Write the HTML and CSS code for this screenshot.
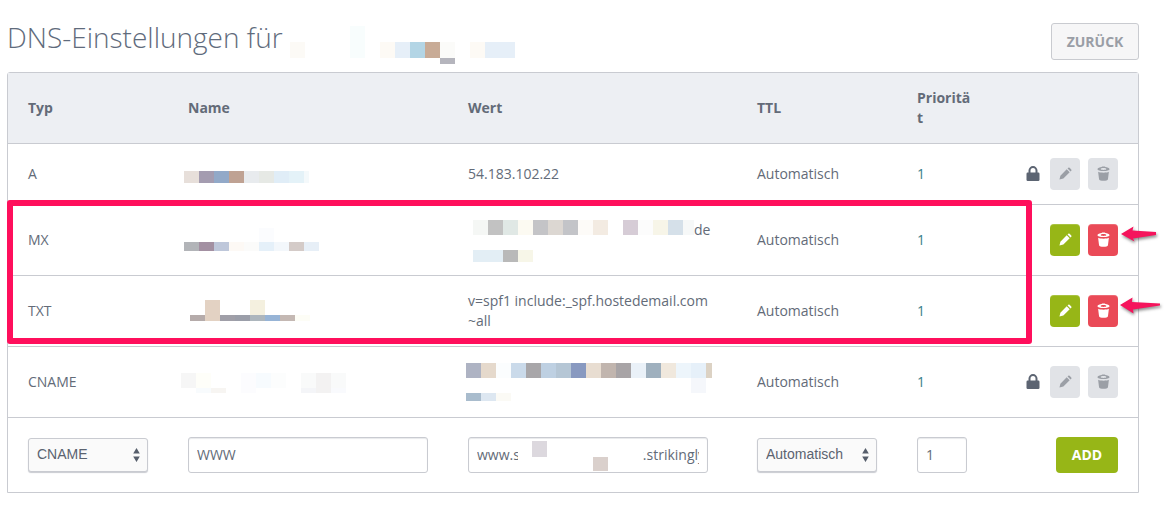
FILE: index.html
```html
<!DOCTYPE html>
<html lang="de">
<head>
<meta charset="utf-8">
<title>DNS-Einstellungen</title>
<link rel="stylesheet" href="styles.css">
</head>
<body>
<main class="page">
  <header class="head">
    <h1 class="title">DNS-Einstellungen für</h1>
    <button class="back" type="button">ZURÜCK</button>
  </header>
  <div class="panel">
    <table class="dns">
      <colgroup>
        <col class="c-type"><col class="c-name"><col class="c-value"><col class="c-ttl"><col class="c-prio"><col class="c-act">
      </colgroup>
      <thead>
        <tr><th>Typ</th><th>Name</th><th>Wert</th><th>TTL</th><th class="prio-h">Priorität</th><th></th></tr>
      </thead>
      <tbody>
        <tr class="r-a">
          <td>A</td><td></td><td>54.183.102.22</td><td>Automatisch</td><td class="prio">1</td>
          <td><div class="acts">
            <svg class="lock" viewBox="0 0 14 16"><path d="M3.500 7V4.600a3.500 3.500 0 0 1 7 0V7" fill="none" stroke="#5c6472" stroke-width="2"/><rect x="0.500" y="6.500" width="13" height="8.500" rx="1.200" fill="#5c6472"/></svg>
            <button class="ic off" type="button"><svg class="pen" viewBox="0 0 14 14"><path d="M0.500 13.500l1-4.200 6.800-6.800 3.200 3.200-6.800 6.800zM9.200 1.600l.8-.8a1 1 0 0 1 1.400 0l1.800 1.800a1 1 0 0 1 0 1.400l-.8.8z"/></svg></button>
            <button class="ic off" type="button"><svg class="bin" viewBox="0 0 14 16"><path fill-rule="evenodd" d="M0.500 3.400C0.500 2 3.200 1.200 5 1c.3-.6 3.700-.6 4 0 1.800.2 4.500 1 4.500 2.400 0 1.200-2.800 2-6.500 2s-6.500-.8-6.500-2zM4 3.200c0 .6 1.400 1 3 1s3-.4 3-1-1.400-1-3-1-3 .4-3 1zM1.200 6.200c1.400.7 3.500 1 5.800 1s4.400-.3 5.800-1l-1 8c-.2 1.100-2.400 1.600-4.800 1.600s-4.600-.5-4.800-1.600z"/></svg></button>
          </div></td>
        </tr>
        <tr class="r-b">
          <td>MX</td><td></td><td><span class="after-mask">de</span></td><td>Automatisch</td><td class="prio">1</td>
          <td><div class="acts">
            <button class="ic ok" type="button"><svg class="pen" viewBox="0 0 14 14"><path d="M0.500 13.500l1-4.200 6.800-6.800 3.200 3.200-6.800 6.800zM9.200 1.600l.8-.8a1 1 0 0 1 1.400 0l1.800 1.800a1 1 0 0 1 0 1.400l-.8.8z"/></svg></button>
            <button class="ic del" type="button"><svg class="bin" viewBox="0 0 14 16"><path fill-rule="evenodd" d="M0.500 3.400C0.500 2 3.200 1.200 5 1c.3-.6 3.700-.6 4 0 1.800.2 4.500 1 4.500 2.400 0 1.200-2.800 2-6.500 2s-6.500-.8-6.500-2zM4 3.200c0 .6 1.400 1 3 1s3-.4 3-1-1.400-1-3-1-3 .4-3 1zM1.200 6.200c1.400.7 3.500 1 5.800 1s4.400-.3 5.800-1l-1 8c-.2 1.100-2.400 1.600-4.800 1.600s-4.600-.5-4.800-1.600z"/></svg></button>
          </div></td>
        </tr>
        <tr class="r-b">
          <td>TXT</td><td></td><td>v=spf1 include:_spf.hostedemail.com ~all</td><td>Automatisch</td><td class="prio">1</td>
          <td><div class="acts">
            <button class="ic ok" type="button"><svg class="pen" viewBox="0 0 14 14"><path d="M0.500 13.500l1-4.200 6.800-6.800 3.200 3.200-6.800 6.800zM9.200 1.600l.8-.8a1 1 0 0 1 1.400 0l1.800 1.800a1 1 0 0 1 0 1.400l-.8.8z"/></svg></button>
            <button class="ic del" type="button"><svg class="bin" viewBox="0 0 14 16"><path fill-rule="evenodd" d="M0.500 3.400C0.500 2 3.200 1.200 5 1c.3-.6 3.700-.6 4 0 1.800.2 4.500 1 4.500 2.400 0 1.200-2.800 2-6.500 2s-6.500-.8-6.500-2zM4 3.200c0 .6 1.400 1 3 1s3-.4 3-1-1.400-1-3-1-3 .4-3 1zM1.200 6.200c1.400.7 3.500 1 5.800 1s4.400-.3 5.800-1l-1 8c-.2 1.100-2.400 1.600-4.800 1.600s-4.600-.5-4.800-1.600z"/></svg></button>
          </div></td>
        </tr>
        <tr class="r-b">
          <td>CNAME</td><td></td><td></td><td>Automatisch</td><td class="prio">1</td>
          <td><div class="acts">
            <svg class="lock" viewBox="0 0 14 16"><path d="M3.500 7V4.600a3.500 3.500 0 0 1 7 0V7" fill="none" stroke="#5c6472" stroke-width="2"/><rect x="0.500" y="6.500" width="13" height="8.500" rx="1.200" fill="#5c6472"/></svg>
            <button class="ic off" type="button"><svg class="pen" viewBox="0 0 14 14"><path d="M0.500 13.500l1-4.200 6.800-6.800 3.200 3.200-6.800 6.800zM9.200 1.600l.8-.8a1 1 0 0 1 1.400 0l1.800 1.800a1 1 0 0 1 0 1.400l-.8.8z"/></svg></button>
            <button class="ic off" type="button"><svg class="bin" viewBox="0 0 14 16"><path fill-rule="evenodd" d="M0.500 3.400C0.500 2 3.200 1.200 5 1c.3-.6 3.700-.6 4 0 1.800.2 4.500 1 4.500 2.400 0 1.200-2.800 2-6.500 2s-6.500-.8-6.500-2zM4 3.200c0 .6 1.400 1 3 1s3-.4 3-1-1.400-1-3-1-3 .4-3 1zM1.200 6.200c1.400.7 3.500 1 5.800 1s4.400-.3 5.800-1l-1 8c-.2 1.100-2.400 1.600-4.800 1.600s-4.600-.5-4.800-1.600z"/></svg></button>
          </div></td>
        </tr>
        <tr class="r-form">
          <td><label class="sel"><select><option>CNAME</option></select><svg viewBox="0 0 7 14"><path d="M3.500 0l3.300 5.500H.2zM3.500 14L.2 8.500h6.600z"/></svg></label></td>
          <td><input class="field" type="text" value="WWW"></td>
          <td><input class="field" type="text" value="www.sxxxxxxxxxxxxxxxxr.strikingly.com"></td>
          <td><label class="sel"><select><option>Automatisch</option></select><svg viewBox="0 0 7 14"><path d="M3.500 0l3.300 5.500H.2zM3.500 14L.2 8.500h6.600z"/></svg></label></td>
          <td><input class="field num" type="text" value="1"></td>
          <td><div class="acts"><button class="add" type="button">ADD</button></div></td>
        </tr>
      </tbody>
    </table>
  </div>
</main>

<svg class="marks" viewBox="0 0 1169 505" aria-hidden="true">
  <g shape-rendering="crispEdges">
    <!-- title -->
    <rect x="290" y="42" width="15" height="16" fill="#fcfaf6"/>
    <rect x="350" y="26" width="15" height="32" fill="#f8fdfd"/>
    <rect x="380" y="42" width="15" height="16" fill="#fdfaf5"/>
    <rect x="395" y="42" width="15" height="16" fill="#e6eff8"/>
    <rect x="410" y="42" width="15" height="16" fill="#b3d5e5"/>
    <rect x="425" y="42" width="15" height="16" fill="#c8ab96"/>
    <rect x="440" y="42" width="15" height="16" fill="#fbfbf9"/>
    <rect x="440" y="58" width="15" height="6" fill="#b5b5bd"/>
    <rect x="470" y="42" width="15" height="16" fill="#fdfaf5"/>
    <rect x="485" y="42" width="30" height="16" fill="#e6eff8"/>
    <!-- A name -->
    <rect x="184" y="171" width="15" height="12" fill="#e7dfda"/>
    <rect x="199" y="171" width="15" height="12" fill="#a49cb0"/>
    <rect x="214" y="171" width="15" height="12" fill="#92a9c8"/>
    <rect x="229" y="171" width="15" height="12" fill="#bfa293"/>
    <rect x="244" y="171" width="15" height="12" fill="#e8ebee"/>
    <rect x="259" y="171" width="15" height="12" fill="#e6e9e5"/>
    <rect x="274" y="171" width="15" height="12" fill="#e0edf7"/>
    <rect x="289" y="171" width="15" height="12" fill="#e4f2f8"/>
    <rect x="304" y="171" width="5" height="12" fill="#f4f9fb"/>
    <!-- MX name -->
    <rect x="259" y="228" width="15" height="14" fill="#fbfcfe"/>
    <rect x="184" y="242" width="15" height="9" fill="#b2b4b8"/>
    <rect x="199" y="242" width="15" height="9" fill="#a390a2"/>
    <rect x="214" y="242" width="15" height="9" fill="#bec7da"/>
    <rect x="229" y="242" width="15" height="9" fill="#fdf9f5"/>
    <rect x="244" y="242" width="15" height="9" fill="#fbfbfa"/>
    <rect x="259" y="242" width="15" height="9" fill="#e5f0f9"/>
    <rect x="274" y="242" width="15" height="9" fill="#f3f7fb"/>
    <rect x="289" y="242" width="15" height="9" fill="#d4cbc8"/>
    <rect x="304" y="242" width="15" height="9" fill="#e7eff7"/>
    <!-- MX value -->
    <rect x="473" y="220" width="15" height="15" fill="#f5f7f5"/>
    <rect x="488" y="220" width="15" height="15" fill="#c2c2c2"/>
    <rect x="503" y="220" width="15" height="15" fill="#e0e8e5"/>
    <rect x="518" y="220" width="15" height="15" fill="#fcfaf2"/>
    <rect x="533" y="220" width="15" height="15" fill="#c4c4c7"/>
    <rect x="548" y="220" width="15" height="15" fill="#dcd7d2"/>
    <rect x="563" y="220" width="15" height="15" fill="#c3c4c8"/>
    <rect x="578" y="220" width="15" height="15" fill="#fdfbf8"/>
    <rect x="593" y="220" width="15" height="15" fill="#f3ebe2"/>
    <rect x="623" y="220" width="15" height="15" fill="#d6ccd6"/>
    <rect x="638" y="220" width="15" height="15" fill="#fcfcfc"/>
    <rect x="653" y="220" width="15" height="15" fill="#f7f5e8"/>
    <rect x="668" y="220" width="15" height="15" fill="#d5e0e9"/>
    <rect x="683" y="220" width="11" height="15" fill="#f6f8f8"/>
    <rect x="473" y="250" width="30" height="12" fill="#e3eef5"/>
    <rect x="503" y="250" width="15" height="12" fill="#b9b9b9"/>
    <rect x="518" y="250" width="15" height="12" fill="#f7f6e8"/>
    <!-- TXT name -->
    <rect x="205" y="300" width="15" height="15" fill="#e3d2c3"/>
    <rect x="250" y="300" width="15" height="15" fill="#f4f0df"/>
    <rect x="190" y="315" width="15" height="6" fill="#b5abaa"/>
    <rect x="205" y="315" width="15" height="6" fill="#e3d2c3"/>
    <rect x="220" y="315" width="15" height="6" fill="#a09fa8"/>
    <rect x="235" y="315" width="15" height="6" fill="#9b9ea9"/>
    <rect x="250" y="315" width="15" height="6" fill="#adb6bd"/>
    <rect x="265" y="315" width="15" height="6" fill="#97b4d6"/>
    <rect x="280" y="315" width="15" height="6" fill="#c4b8b3"/>
    <rect x="295" y="315" width="15" height="6" fill="#fdfdf6"/>
    <!-- CNAME name -->
    <rect x="181" y="373" width="15" height="15" fill="#f6f6f6"/>
    <rect x="196" y="373" width="15" height="15" fill="#fefef9"/>
    <rect x="196" y="388" width="15" height="5" fill="#f8fbfd"/>
    <rect x="211" y="388" width="15" height="5" fill="#f7f5f2"/>
    <rect x="241" y="373" width="15" height="20" fill="#fcfcfe"/>
    <rect x="256" y="373" width="15" height="15" fill="#f7fbfe"/>
    <rect x="271" y="373" width="15" height="15" fill="#fcfdfd"/>
    <rect x="301" y="373" width="15" height="15" fill="#f9fafa"/>
    <rect x="301" y="388" width="15" height="5" fill="#f4f5f8"/>
    <rect x="316" y="373" width="15" height="20" fill="#f3f2f2"/>
    <rect x="331" y="373" width="15" height="15" fill="#f9fafa"/>
    <rect x="331" y="388" width="15" height="5" fill="#f9fafd"/>
    <!-- CNAME value -->
    <rect x="466" y="363" width="15" height="15" fill="#aeb3c3"/>
    <rect x="481" y="363" width="15" height="15" fill="#e5d9cc"/>
    <rect x="496" y="363" width="15" height="15" fill="#fbfdfe"/>
    <rect x="511" y="363" width="15" height="15" fill="#cadaea"/>
    <rect x="526" y="363" width="15" height="15" fill="#a8a6a9"/>
    <rect x="541" y="363" width="15" height="15" fill="#bed0e2"/>
    <rect x="556" y="363" width="15" height="15" fill="#b5c6d5"/>
    <rect x="571" y="363" width="15" height="15" fill="#8899c0"/>
    <rect x="586" y="363" width="15" height="15" fill="#e8ddd1"/>
    <rect x="601" y="363" width="15" height="15" fill="#c1b5ae"/>
    <rect x="616" y="363" width="15" height="15" fill="#a8a4a6"/>
    <rect x="631" y="363" width="15" height="15" fill="#eaf1f8"/>
    <rect x="646" y="363" width="15" height="15" fill="#9fb0be"/>
    <rect x="661" y="363" width="15" height="15" fill="#f0e8dd"/>
    <rect x="676" y="363" width="15" height="15" fill="#edf5fb"/>
    <rect x="691" y="363" width="15" height="15" fill="#e6f0f9"/>
    <rect x="706" y="363" width="6" height="15" fill="#dcd2c4"/>
    <rect x="691" y="378" width="15" height="15" fill="#f5f7fb"/>
    <rect x="466" y="393" width="15" height="8" fill="#a9bccd"/>
    <rect x="481" y="393" width="15" height="8" fill="#dde7f1"/>
    <rect x="496" y="393" width="15" height="8" fill="#fbfaf5"/>
    <!-- value input -->
    <rect x="518" y="439" width="125" height="32" fill="#ffffff"/>
    <rect x="532" y="441" width="15" height="16" fill="#dcd8de"/>
    <rect x="593" y="457" width="15" height="14" fill="#dad0cc"/>
  </g>
  <rect class="frame" x="10" y="203" width="1019" height="138"/>
  <path class="arrow" d="M1121 234 L1133.500 226.500 L1132.500 230.500 L1156 232 L1156 235 L1133 238.500 L1134.500 241.500 Z"/>
  <path class="arrow" d="M1120 305 L1132.500 297.500 L1132 302 L1160 303.500 L1160 305.500 L1133 309.500 L1133.500 313.500 Z"/>
</svg>
</body>
</html>
```

FILE: styles.css
```css
* { box-sizing: border-box; }
html, body { margin: 0; padding: 0; background: #fff; }
body {
  width: 1169px;
  height: 505px;
  overflow: hidden;
  position: relative;
  font-family: "Open Sans", sans-serif;
  font-size: 14px;
  color: #636b78;
}
.page { padding: 23px 30px 0 7px; }
.head {
  display: flex;
  justify-content: space-between;
  align-items: flex-start;
  height: 49px;
}
.title {
  margin: 0;
  font-size: 28px;
  font-weight: 300;
  line-height: 28px;
  color: #5f6b7c;
}
.back {
  width: 88px;
  height: 37px;
  border: 1px solid #c9cbd0;
  border-radius: 3px;
  background: #f6f6f7;
  color: #9a9ea6;
  font: 700 14px "Open Sans", sans-serif;
  padding: 0;
}
.panel {
  border: 1px solid #c9cbd1;
  border-radius: 3px 3px 0 0;
  height: 421px;
}
.dns {
  width: 1130px;
  border-collapse: collapse;
  table-layout: fixed;
}
.c-type { width: 160px; }
.c-name { width: 280px; }
.c-value { width: 289px; }
.c-ttl { width: 160px; }
.c-prio { width: 100px; }
.c-act { width: 141px; }
th, td { padding: 0 20px; text-align: left; vertical-align: middle; }
thead tr { height: 70px; background: #edeff3; border-bottom: 1px solid #c9cbd1; }
th { font-weight: 700; font-size: 14px; line-height: 20px; color: #636b78; }
th.prio-h { word-break: break-all; padding-right: 24px; }
td { line-height: 20px; }
tbody tr { border-bottom: 1px solid #c9cbd1; }
.r-a { height: 61px; }
.r-b { height: 71px; }
.r-form { height: 75px; border-bottom: 0; }
.prio { color: #38808a; }
.after-mask { display: block; padding-left: 226px; margin-bottom: 20px; white-space: nowrap; }
.acts { display: flex; justify-content: flex-end; align-items: center; gap: 8px; }
.lock { width: 14px; height: 16px; margin-right: 2px; }
.ic {
  width: 30px;
  height: 32px;
  padding: 0;
  border: 0;
  border-radius: 4px;
  display: flex;
  align-items: center;
  justify-content: center;
}
.ic .pen { width: 13px; height: 13px; display: block; }
.ic .bin { width: 13px; height: 15px; display: block; }
.off { background: #e1e3e7; }
.off svg { fill: #9b9fa6; }
.ok { background: #97b617; box-shadow: inset 0 1px 0 rgba(255, 255, 255, .18); }
.del { background: #ea4a57; box-shadow: inset 0 1px 0 rgba(255, 255, 255, .18); }
.ok svg, .del svg { fill: #fff; }
.sel { position: relative; display: block; }
.sel select {
  display: block;
  width: 120px;
  height: 34px;
  appearance: none;
  -webkit-appearance: none;
  border: 1px solid #c9cbd1;
  border-radius: 3px;
  background: #fafafa;
  box-shadow: 0 1px 1px #c9cbd1;
  padding: 0 0 2px 8px;
  font: 14px "Liberation Sans", Arial, sans-serif;
  color: #5b6370;
}
.sel svg {
  position: absolute;
  right: 8px;
  top: 10px;
  width: 7px;
  height: 14px;
  fill: #565e6b;
}
.field {
  display: block;
  width: 240px;
  height: 36px;
  border: 1px solid #c9cbd1;
  border-radius: 3px;
  background: #fff;
  box-shadow: inset 0 1px 1px #e8e9ec;
  padding: 0 8px;
  font: 14px "Open Sans", sans-serif;
  color: #636b78;
}
.num { width: 50px; }
.add {
  width: 62px;
  height: 36px;
  border: 0;
  border-radius: 4px;
  background: #97b617;
  color: #fff;
  font: 700 14px "Open Sans", sans-serif;
  padding: 0;
}
.marks {
  position: absolute;
  left: 0;
  top: 0;
  width: 1169px;
  height: 505px;
  pointer-events: none;
}
.frame { fill: none; stroke: #ff0f5c; stroke-width: 6; stroke-linejoin: round; }
.arrow { fill: #f5145c; filter: drop-shadow(1px 2px 1.5px rgba(50, 50, 50, .55)); }
```
